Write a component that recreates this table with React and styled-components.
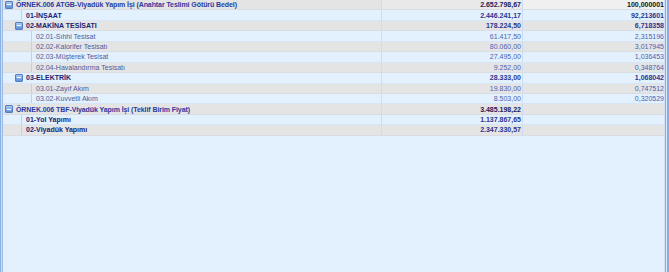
import React from "react";
import styled, { createGlobalStyle } from "styled-components";

const GlobalStyle = createGlobalStyle`
  html, body {
    margin: 0;
    padding: 0;
    background: #e3f0fd;
  }
  #root {
    width: 669px;
    height: 272px;
  }
`;

const Frame = styled.div`
  width: 669px;
  height: 272px;
  box-sizing: border-box;
  background: #e3f0fd;
  display: flex;
  font-family: "Liberation Sans", Arial, sans-serif;
  font-size: 7px;
`;

const EdgeLeft = styled.div`
  width: 3px;
  flex: none;
  background: linear-gradient(to right, #8eb1e3 0, #8eb1e3 1px, #c9dcf6 1px, #c9dcf6 2px, #9dbde9 2px);
`;

const EdgeRight = styled.div`
  width: 5px;
  flex: none;
  background: linear-gradient(to right, #cfe0f7 0, #cfe0f7 1px, #8eb1e3 1px, #8eb1e3 2px, #d8e6f8 2px, #d8e6f8 3px, #8aaee2 3px);
`;

const Grid = styled.div`
  flex: 1;
  display: flex;
  flex-direction: column;
`;

const Row = styled.div`
  display: grid;
  grid-template-columns: 379px 141px 1fr;
  height: 10.45px;
  box-sizing: border-box;
  background: ${(p) => (p.$odd ? "#e3f0fd" : "#e4e4e4")};
  border-bottom: 1px solid ${(p) => (p.$odd ? "#d6e5f8" : "#d9dde3")};
`;

const Cell = styled.div`
  display: flex;
  align-items: center;
  overflow: hidden;
  white-space: nowrap;
  border-right: 1px solid #cbddf6;
  justify-content: ${(p) => (p.$right ? "flex-end" : "flex-start")};
  padding-right: ${(p) => (p.$right ? "1px" : "0")};
  background: ${(p) => p.$bg || "transparent"};
  font-weight: ${(p) => (p.$bold ? 700 : 400)};
  color: ${(p) => p.$color};
  line-height: 9px;
`;

const LastCell = styled(Cell)`
  border-right: none;
  padding-right: 0;
`;

const Indent = styled.div`
  flex: none;
  width: ${(p) => p.$w}px;
  height: 100%;
  position: relative;
`;

const TreeLine = styled.div`
  position: absolute;
  top: 0;
  bottom: 0;
  left: ${(p) => p.$x}px;
  width: 1px;
  background: #c3cfe2;
`;

const Toggle = styled.span`
  flex: none;
  width: 6px;
  height: 6px;
  margin: 0 3px 0 ${(p) => p.$ml}px;
  border-radius: 1px;
  border: 1px solid #4f7fc7;
  background: linear-gradient(#a9c8f0, #5e90d8);
  display: flex;
  align-items: center;
  justify-content: center;
  box-sizing: content-box;
`;

const Minus = styled.span`
  width: 4px;
  height: 1px;
  background: #ffffff;
`;

const Label = styled.span`
  letter-spacing: ${(p) => (p.$tight ? "-0.08px" : "0")};
`;

const rows = [
  { level: 0, open: true, name: "ÖRNEK.006 ATGB-Viyadük Yapım İşi (Anahtar Teslimi Götürü Bedel)", amount: "2.652.798,67", pct: "100,000001" },
  { level: 1, name: "01-İNŞAAT", amount: "2.446.241,17", pct: "92,213601" },
  { level: 1, open: true, name: "02-MAKİNA TESİSATI", amount: "178.224,50", pct: "6,718358" },
  { level: 2, name: "02.01-Sıhhi Tesisat", amount: "61.417,50", pct: "2,315196" },
  { level: 2, name: "02.02-Kalorifer Tesisatı", amount: "80.060,00", pct: "3,017945" },
  { level: 2, name: "02.03-Müşterek Tesisat", amount: "27.495,00", pct: "1,036453" },
  { level: 2, name: "02.04-Havalandırma Tesisatı", amount: "9.252,00", pct: "0,348764" },
  { level: 1, open: true, name: "03-ELEKTRİK", amount: "28.333,00", pct: "1,068042" },
  { level: 2, name: "03.01-Zayıf Akım", amount: "19.830,00", pct: "0,747512" },
  { level: 2, name: "03.02-Kuvvetli Akım", amount: "8.503,00", pct: "0,320529" },
  { level: 0, open: true, name: "ÖRNEK.006 TBF-Viyadük Yapım İşi (Teklif Birim Fiyat)", amount: "3.485.198,22", pct: "" },
  { level: 1, name: "01-Yol Yapımı", amount: "1.137.867,65", pct: "" },
  { level: 1, name: "02-Viyadük Yapımı", amount: "2.347.330,57", pct: "" },
];

const nameColor = ["#2b3aa0", "#1c2473", "#4c5c9c"];
const amountColor = ["#1c2060", "#2a3790", "#4a63b4"];
const pctColor = ["#111122", "#2a3790", "#4a63b4"];

function NameCell({ row }) {
  const textX = 13 + row.level * 10;
  const bold = row.level < 2;
  if (row.open) {
    return (
      <Cell $bold={bold} $color={nameColor[row.level]}>
        <Toggle $ml={textX - 11}>
          <Minus />
        </Toggle>
        <Label $tight={row.level === 0}>{row.name}</Label>
      </Cell>
    );
  }
  return (
    <Cell $bold={bold} $color={nameColor[row.level]}>
      <Indent $w={textX}>
        <TreeLine $x={textX - 5} />
      </Indent>
      <Label>{row.name}</Label>
    </Cell>
  );
}

export default function App() {
  return (
    <>
      <GlobalStyle />
      <Frame>
        <EdgeLeft />
        <Grid>
          {rows.map((row, i) => {
            const bold = row.level < 2;
            return (
              <Row key={i} $odd={i % 2 === 1}>
                <NameCell row={row} />
                <Cell $right $bold={bold} $color={amountColor[row.level]} $bg={i === 0 ? "#e9e9e9" : undefined}>
                  {row.amount}
                </Cell>
                <LastCell $right $bold={bold} $color={pctColor[row.level]} $bg={i === 0 ? "#f0f0f0" : undefined}>
                  {row.pct}
                </LastCell>
              </Row>
            );
          })}
        </Grid>
        <EdgeRight />
      </Frame>
    </>
  );
}
